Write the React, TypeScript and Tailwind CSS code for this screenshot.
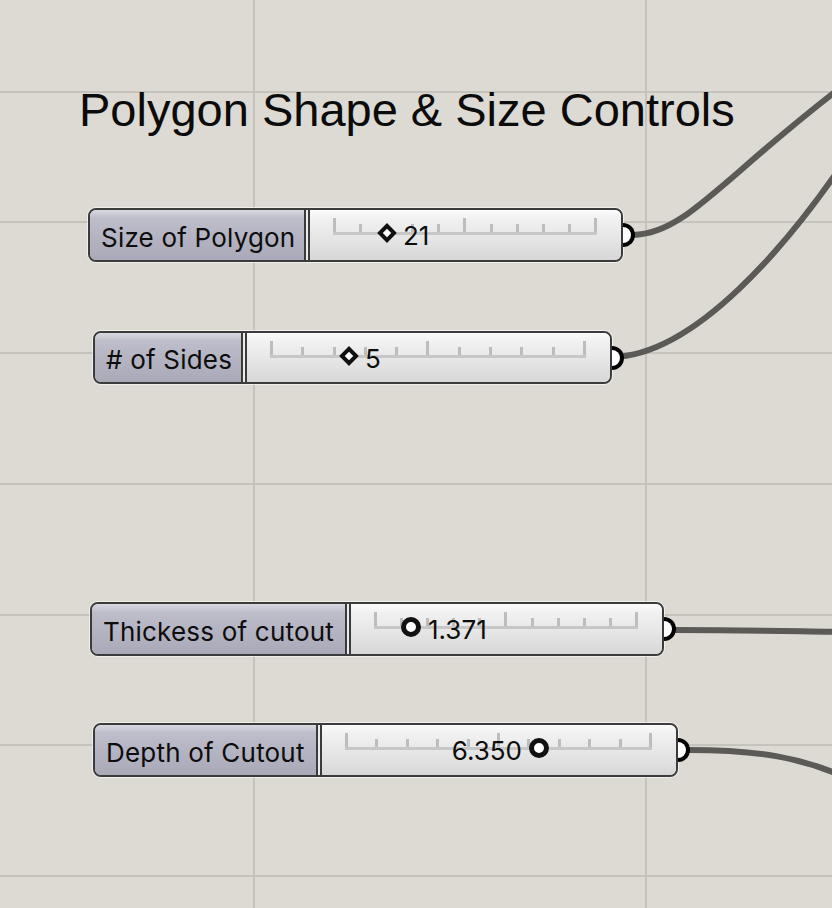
import React from 'react';

type Marker = 'diamond' | 'circle';

type SliderProps = {
  pos: string;
  labelW: string;
  label: string;
  value: string;
  marker: Marker;
  place: string;
  valueFirst?: boolean;
};

const Ticks: React.FC = () => (
  <div className="absolute left-0 right-0 top-[9px] h-[16px] flex items-end justify-between border-b-[3px] border-[#c7c7c7]">
    {Array.from({ length: 11 }).map((_, i) => (
      <div key={i} className={`w-[3px] bg-[#bdbdbd] ${i % 5 === 0 ? 'h-[14px]' : 'h-[8px]'}`} />
    ))}
  </div>
);

const Grip: React.FC<{ marker: Marker }> = ({ marker }) =>
  marker === 'diamond' ? (
    <div className="mx-[2px] w-[14px] h-[14px] rotate-45 border-4 border-[#111] bg-white" />
  ) : (
    <div className="w-[20px] h-[20px] rounded-full border-[5px] border-[#111] bg-white" />
  );

const NumberSlider: React.FC<SliderProps> = ({ pos, labelW, label, value, marker, place, valueFirst }) => (
  <div className={`absolute ${pos} flex rounded-[8px] border-2 border-[#3b3b3b] shadow-[0_0_0_1px_rgba(255,255,255,0.6)]`}>
    <div className={`${labelW} h-full rounded-l-[6px] border-r-2 border-[#3b3b3b] bg-[linear-gradient(to_bottom,#d9d9e1_0%,#bebecb_16%,#b3b3c1_55%,#a9a9b8_100%)] flex items-center pl-[11px] pt-[4px] text-[26px] tracking-[0.2px] text-[#0d0d0d] whitespace-nowrap`}>
      {label}
    </div>
    <div className="w-[2px] h-full bg-[#ececec]" />
    <div className="relative flex-1 h-full rounded-r-[6px] border-l-2 border-[#3b3b3b] bg-[linear-gradient(to_bottom,#fbfbfb_0%,#f1f1f1_18%,#e3e3e3_65%,#d7d7d7_100%)] pl-[23px] pr-[24px]">
      <div className="relative h-full">
        <Ticks />
        <div className={`absolute ${place} top-[23px] -translate-y-1/2 flex items-center gap-[7px]`}>
          {valueFirst && <span className="text-[26px] leading-none text-[#0d0d0d] translate-y-[3px]">{value}</span>}
          <Grip marker={marker} />
          {!valueFirst && <span className="text-[26px] leading-none text-[#0d0d0d] translate-y-[3px]">{value}</span>}
        </div>
      </div>
    </div>
    <div className="absolute -right-[14px] top-1/2 -translate-y-1/2 w-[12px] h-[24px] rounded-r-full border-[4px] border-l-0 border-black bg-white" />
  </div>
);

export default function App() {
  return (
    <div className="relative w-[832px] h-[908px] overflow-hidden bg-[#dddad4] font-['Inter',sans-serif]">
      <svg className="absolute inset-0" width="832" height="908" viewBox="0 0 832 908">
        <g stroke="#c6c3bd" strokeWidth="2">
          {[92, 222, 353, 484, 615, 745, 876].map(y => (
            <line key={y} x1="0" y1={y} x2="832" y2={y} />
          ))}
          <line x1="254" y1="0" x2="254" y2="908" />
          <line x1="646" y1="0" x2="646" y2="908" />
        </g>
        <g stroke="#5b5a56" strokeWidth="6" fill="none" strokeLinecap="round">
          <path d="M 633 235 C 685 234, 720 180, 840 88" />
          <path d="M 612 357 C 695 356, 790 243, 850 153" />
          <path d="M 674 630 C 750 630, 780 631, 840 632" />
          <path d="M 688 750 C 760 750, 800 758, 840 775" />
        </g>
      </svg>

      <div className="absolute left-[79px] top-[86px] font-['Liberation_Sans',Arial,sans-serif] text-[47px] leading-none text-[#0b0b0b] whitespace-nowrap">
        Polygon Shape &amp; Size Controls
      </div>

      <NumberSlider pos="left-[88px] top-[208px] w-[535px] h-[54px]" labelW="w-[216px]" label="Size of Polygon" value="21" marker="diamond" place="left-[45px]" />
      <NumberSlider pos="left-[93px] top-[331px] w-[519px] h-[53px]" labelW="w-[148px]" label="# of Sides" value="5" marker="diamond" place="left-[70px]" />
      <NumberSlider pos="left-[90px] top-[602px] w-[574px] h-[54px]" labelW="w-[255px]" label="Thickess of cutout" value="1.371" marker="circle" place="left-[27px]" />
      <NumberSlider pos="left-[93px] top-[723px] w-[585px] h-[54px]" labelW="w-[223px]" label="Depth of Cutout" value="6.350" marker="circle" place="right-[103px]" valueFirst />
    </div>
  );
}
